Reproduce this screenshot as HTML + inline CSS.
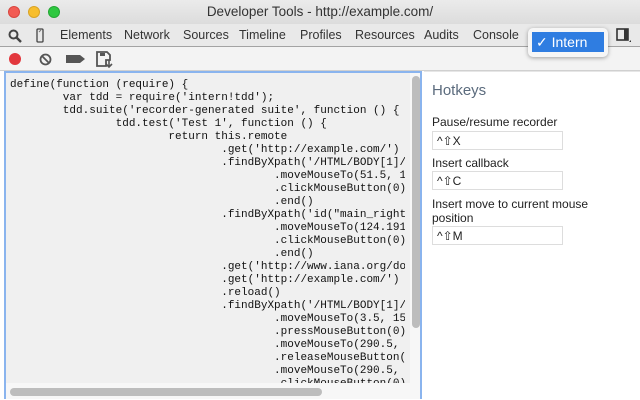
<!DOCTYPE html>
<html><head><style>
*{margin:0;padding:0;box-sizing:border-box}
body{width:640px;height:400px;overflow:hidden;background:#fff;font-family:"Liberation Sans",sans-serif;position:relative}
.title{position:absolute;left:0;top:0;width:640px;height:24px;background:linear-gradient(#ebebeb,#dcdcdc);text-align:center;font-size:13.5px;line-height:24px;color:#333}
.dot{position:absolute;top:6px;width:12px;height:12px;border-radius:50%}
.tabs{position:absolute;left:0;top:24px;width:640px;height:23px;background:#e9e9e9;border-bottom:1px solid #a3a3a3;font-size:12.5px;color:#333}
.tabs span{position:absolute;top:4px}
.tb{position:absolute;left:0;top:47px;width:640px;height:24px;background:#f3f3f3;border-bottom:1px solid #d0d0d0}
.code{position:absolute;left:4px;top:71px;width:418px;height:328px;border:2px solid #8ab4ee;border-bottom:none;background:#f0f0f0;overflow:hidden}
pre{position:absolute;left:4px;top:6px;font-family:"Liberation Mono",monospace;font-size:11px;line-height:13px;color:#111;width:395px;height:304px;overflow:hidden;white-space:pre}
.vs{position:absolute;left:404px;top:0;width:12px;height:330px;background:#f7f7f7}
.vs div{position:absolute;left:2px;top:3px;width:8px;height:252px;border-radius:4px;background:#bdbdbd}
.hs{position:absolute;left:0;top:310px;width:404px;height:20px;background:#f7f7f7}
.hs div{position:absolute;left:4px;top:5px;width:312px;height:8px;border-radius:4px;background:#bdbdbd}
.rp{position:absolute;left:424px;top:71px;width:216px;height:329px;background:#fff;border-top:1px solid #e6e6e6}
h2{position:absolute;left:8px;top:10px;font-weight:normal;font-size:15px;color:#5b6b7d}
.l{position:absolute;left:8px;font-size:12px;color:#222;line-height:14px}
.in{position:absolute;left:8px;width:131px;height:19px;border:1px solid #ddd;font-size:12px;padding:2px 4px;color:#222}
</style></head><body>
<div class="title">Developer Tools - http://example.com/
<div class="dot" style="left:8px;background:#f25c54;border:1px solid #d8463f"></div>
<div class="dot" style="left:28px;background:#f7be2d;border:1px solid #d9a326"></div>
<div class="dot" style="left:48px;background:#2ec840;border:1px solid #24a634"></div>
</div>
<div class="tabs">
<svg style="position:absolute;left:8px;top:5px" width="14" height="14"><circle cx="5.5" cy="5.5" r="4" fill="none" stroke="#444" stroke-width="2"/><path d="M8.5 8.5L13 13" stroke="#444" stroke-width="2.4"/></svg>
<svg style="position:absolute;left:36px;top:4px" width="8" height="15"><rect x="1" y="1" width="6" height="13" rx="1" fill="none" stroke="#444" stroke-width="1.3"/><path d="M3 4L5 2" stroke="#777"/></svg>
<span style="left:60px">Elements</span><span style="left:124px">Network</span><span style="left:183px">Sources</span><span style="left:239px">Timeline</span><span style="left:300px">Profiles</span><span style="left:355px">Resources</span><span style="left:424px">Audits</span><span style="left:473px">Console</span>
<svg style="position:absolute;left:616px;top:4px" width="16" height="16"><rect x="1" y="1" width="11" height="11" fill="none" stroke="#333" stroke-width="1.6"/><rect x="8" y="1" width="4" height="11" fill="#333"/><path d="M13 14L15 12V14Z" fill="#333"/></svg>
</div>
<div class="tb">
<div style="position:absolute;left:9px;top:6px;width:12px;height:12px;border-radius:50%;background:#e2373d"></div>
<svg style="position:absolute;left:39px;top:6px" width="13" height="13"><circle cx="6.5" cy="6.5" r="5" fill="none" stroke="#555" stroke-width="1.8"/><path d="M3 3L10 10" stroke="#555" stroke-width="1.8"/></svg>
<svg style="position:absolute;left:66px;top:7px" width="20" height="10"><path d="M0 1H14L19 5L14 9H0Z" fill="#555"/></svg>
<svg style="position:absolute;left:96px;top:4px" width="18" height="18"><path d="M1 1H11L14 4V9H10V15H1Z" fill="none" stroke="#555" stroke-width="1.8"/><rect x="4" y="2" width="5" height="3" fill="#555"/><path d="M13 9V16M10 13L13 16L16 13" fill="none" stroke="#555" stroke-width="1.6"/></svg>
</div>
<div class="code">
<pre>define(function (require) {
        var tdd = require('intern!tdd');
        tdd.suite('recorder-generated suite', function () {
                tdd.test('Test 1', function () {
                        return this.remote
                                .get('http://example.com/')
                                .findByXpath('/HTML/BODY[1]/DIV[1]')
                                        .moveMouseTo(51.5, 1
                                        .clickMouseButton(0)
                                        .end()
                                .findByXpath('id("main_right")')
                                        .moveMouseTo(124.191
                                        .clickMouseButton(0)
                                        .end()
                                .get('http://www.iana.org/domains')
                                .get('http://example.com/')
                                .reload()
                                .findByXpath('/HTML/BODY[1]/DIV[1]')
                                        .moveMouseTo(3.5, 15
                                        .pressMouseButton(0)
                                        .moveMouseTo(290.5,
                                        .releaseMouseButton(
                                        .moveMouseTo(290.5,
                                        .clickMouseButton(0)</pre>
<div class="vs"><div></div></div>
<div class="hs"><div></div></div>
</div>
<div class="rp">
<h2>Hotkeys</h2>
<div class="l" style="top:43px">Pause/resume recorder</div>
<div class="in" style="top:59px">^⇧X</div>
<div class="l" style="top:84px">Insert callback</div>
<div class="in" style="top:99px">^⇧C</div>
<div class="l" style="top:125px">Insert move to current mouse<br>position</div>
<div class="in" style="top:154px">^⇧M</div>
</div>
<div style="position:absolute;left:528px;top:28px;width:80px;height:29px;background:#f6f6f6;border-radius:5px;box-shadow:0 1px 4px rgba(0,0,0,.35)"></div>
<div style="position:absolute;left:532px;top:32px;width:72px;height:20px;background:#2f7de1;color:#fff;font-size:14px;line-height:20px;padding-left:4px">✓ Intern</div>
</body></html>
